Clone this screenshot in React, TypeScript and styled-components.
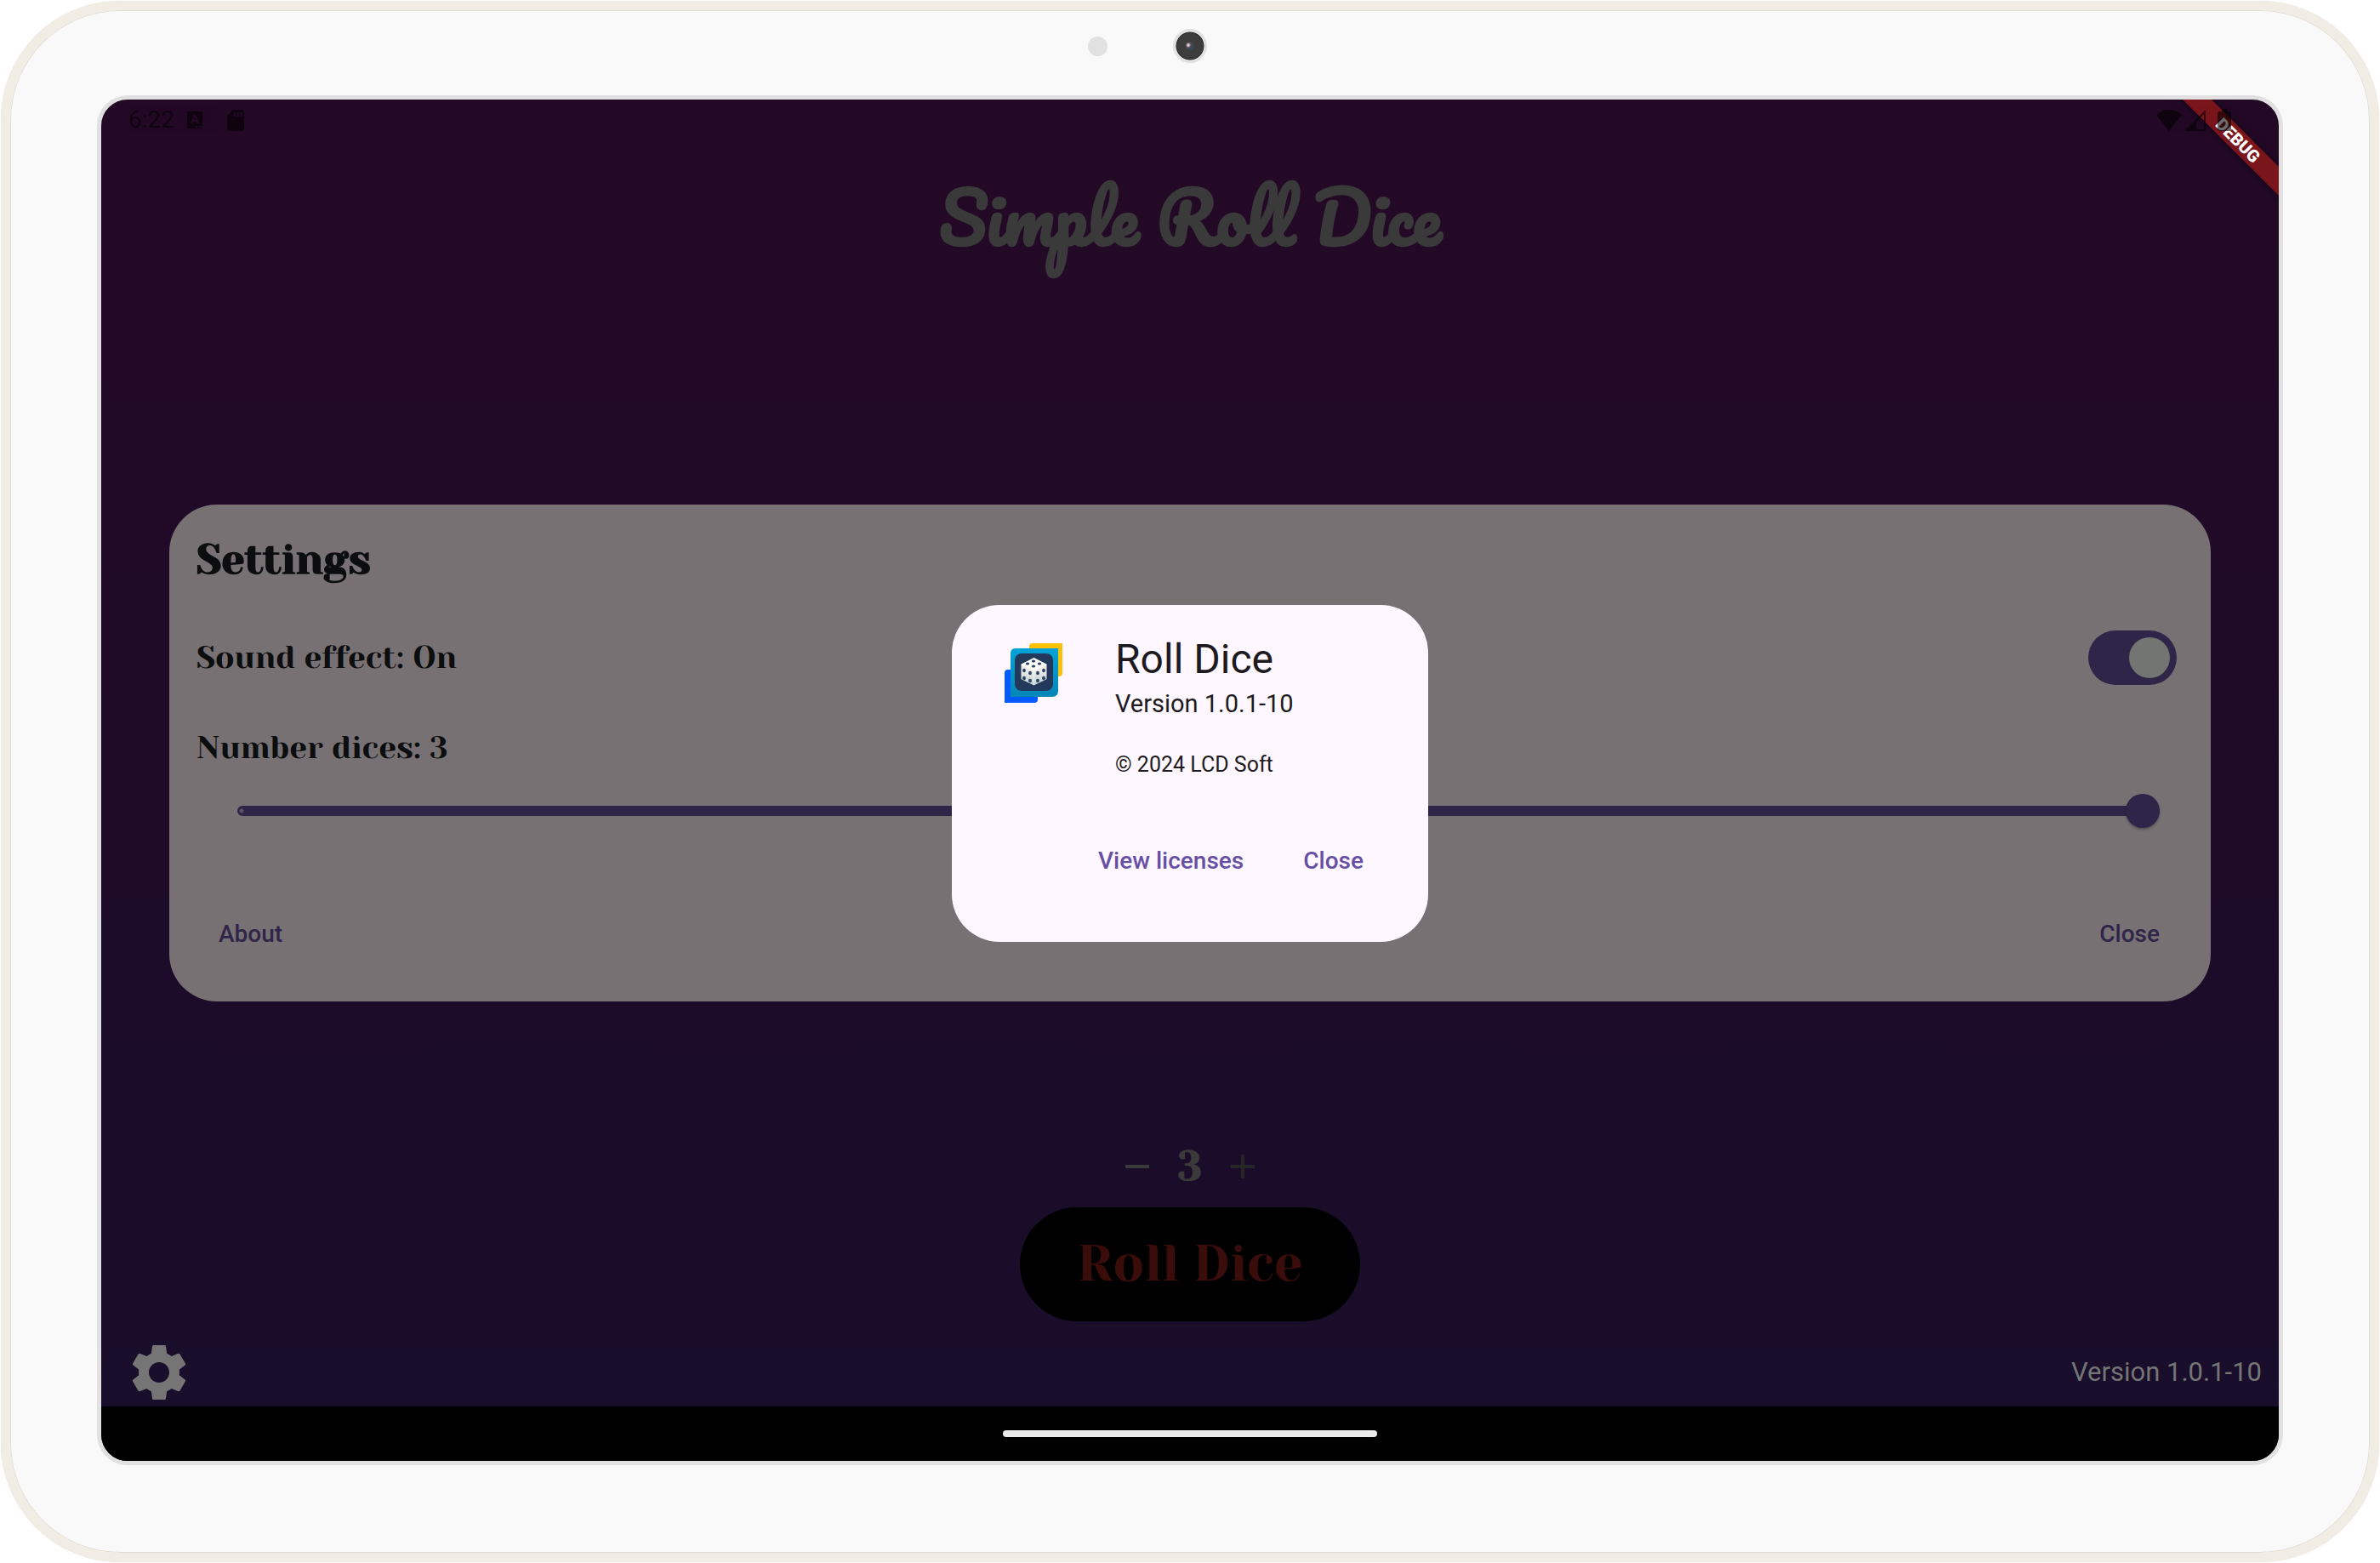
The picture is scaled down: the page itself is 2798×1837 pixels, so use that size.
import React, { useState } from "react";
import styled, { createGlobalStyle } from "styled-components";
import { MdSettings, MdAdd, MdRemove } from "react-icons/md";

const SANS = 'Roboto, "Liberation Sans", sans-serif';
const SERIF = '"Yeseva One", "Liberation Serif", serif';
const SCRIPT = 'Pacifico, Lato, "Liberation Sans", sans-serif';

const GlobalStyle = createGlobalStyle`
  *, *::before, *::after { box-sizing: border-box; }
  body { margin: 0; background: #fff; font-family: ${SANS}; }
  h1, h2, p { margin: 0; }
  button { border: 0; background: none; padding: 0; font-family: inherit; cursor: pointer; }
`;

/* ---------- Tablet ---------- */

const Stage = styled.div`
  display: flex;
  min-height: 100vh;
  padding: 1px;
`;

const Tablet = styled.div`
  flex: 1;
  display: flex;
  flex-direction: column;
  padding: 0 102px 103px;
  border: 11px solid #f1ede4;
  border-radius: 140px;
  background: #f9f9f9;
  box-shadow: inset 0 0 0 1px #e2ddd4, 0 0 1px #d8d4c6;
`;

const Bezel = styled.div`
  display: grid;
  grid-template-columns: 1fr auto 1fr;
  align-items: center;
  column-gap: 77px;
  height: 100px;
  padding: 22px 0 38px;
`;

const Sensor = styled.span`
  justify-self: end;
  width: 23px;
  height: 23px;
  border-radius: 50%;
  background: #e1e1e1;
`;

const Camera = styled.span`
  display: grid;
  place-items: center;
  width: 40px;
  height: 40px;
  border-radius: 50%;
  border: 3px solid #e1e1e1;
  background: radial-gradient(circle, #3d3d3d 15px, #2a2a2a 16px, #f2f2f2 17px);
`;

const Lens = styled.span`
  width: 10px;
  height: 10px;
  border-radius: 50%;
  background: radial-gradient(circle at 30% 40%, #d8ccd0 1px, #574c54 3px, #3a4654 5px);
`;

const Screen = styled.div`
  position: relative;
  flex: 1;
  display: flex;
  flex-direction: column;
  overflow: hidden;
  border: 5px solid #e1e1e1;
  border-radius: 36px;
  background: linear-gradient(#240926, #1e0b28 50%, #180e2b);
`;

/* ---------- System bars ---------- */

const StatusBar = styled.div`
  position: relative;
  z-index: 5;
  display: flex;
  justify-content: space-between;
  align-items: center;
  height: 48px;
  padding: 0 56px 0 32px;
  color: #000;
  opacity: 0.58;
  font-size: 28px;
  line-height: 32px;
`;

const StatusGroup = styled.div<{ $gap: number }>`
  display: flex;
  align-items: center;
  gap: ${(p) => p.$gap}px;

  svg { display: block; fill: currentColor; }
`;

const NavBar = styled.div`
  display: grid;
  place-items: center;
  height: 64px;
  background: #000;
`;

const HomePill = styled.span`
  width: 440px;
  height: 8px;
  border-radius: 4px;
  background: #eaeaea;
`;

const RibbonCorner = styled.div`
  position: absolute;
  top: 0;
  right: 0;
  z-index: 4;
  width: 192px;
  height: 192px;
  overflow: hidden;
  pointer-events: none;
`;

const Ribbon = styled.span`
  position: absolute;
  top: 36px;
  right: -72px;
  width: 240px;
  height: 24px;
  transform: rotate(45deg);
  background: #7a151c;
  box-shadow: 0 0 12px rgba(0, 0, 0, 0.5);
  color: #fff;
  font-size: 20px;
  font-weight: 900;
  line-height: 24px;
  text-align: center;
`;

/* ---------- Home page ---------- */

const Home = styled.main`
  flex: 1;
  display: flex;
  flex-direction: column;
  align-items: center;
`;

const AppTitle = styled.h1`
  flex: 1;
  padding-top: 40px;
  color: #3a3a3a;
  font-family: ${SCRIPT};
  font-size: 81px;
  font-weight: 700;
  line-height: 100px;
`;

const Stepper = styled.div`
  display: flex;
  align-items: center;
  gap: 24px;
  height: 96px;
`;

const StepButton = styled.button`
  display: grid;
  place-items: center;
  color: #3a3a3a;

  &:disabled { color: #262626; }
`;

const StepValue = styled.output`
  color: #3a3a3a;
  font-family: ${SERIF};
  font-size: 49px;
  font-weight: 700;
  line-height: 64px;
`;

const RollButton = styled.button`
  width: 400px;
  height: 134px;
  padding-bottom: 2px;
  border-radius: 67px;
  background: #000;
  color: #3a0d0b;
  font-family: ${SERIF};
  font-size: 60px;
  font-weight: 400;
  line-height: 72px;
`;

const Footer = styled.footer`
  align-self: stretch;
  display: flex;
  justify-content: space-between;
  align-items: center;
  height: 80px;
  margin-top: 20px;
  padding: 0 20px 0 28px;
  color: #757575;
  font-size: 31px;
  line-height: 40px;
`;

const GearButton = styled.button`
  display: grid;
  color: #757575;
`;

/* ---------- Shared by both windows ---------- */

const Layer = styled.div<{ $top: number; $side: number; $depth: number }>`
  position: absolute;
  inset: ${(p) => p.$top}px 0 64px;
  z-index: ${(p) => p.$depth};
  display: grid;
  align-items: center;
  padding: 0 ${(p) => p.$side}px;
`;

const TextButton = styled.button<{ $dim?: boolean }>`
  height: 80px;
  padding: 2px 26px 0;
  border-radius: 40px;
  color: ${(p) => (p.$dim ? "#2f2549" : "#6750a4")};
  font-size: 28px;
  font-weight: 500;
  line-height: 40px;
`;

/* ---------- Settings window ---------- */

const Panel = styled.section`
  display: flex;
  flex-direction: column;
  padding: 30px 34px 40px 32px;
  border-radius: 56px;
  background: #777174;
  color: #0c0d0e;
  font-family: ${SERIF};
`;

const PanelTitle = styled.h2`
  font-size: 49px;
  font-weight: 700;
  line-height: 70px;
`;

const SwitchRow = styled.div`
  display: flex;
  justify-content: space-between;
  align-items: center;
  margin-top: 48px;
  padding-right: 6px;
`;

const SettingLabel = styled.label`
  font-size: 37px;
  font-weight: 400;
  line-height: 64px;
`;

const Switch = styled.input`
  appearance: none;
  width: 104px;
  height: 64px;
  margin: 0;
  padding: 8px;
  border-radius: 32px;
  background: #2f2549;

  &::before {
    content: "";
    display: block;
    width: 48px;
    height: 48px;
    border-radius: 50%;
    background: #737573;
  }

  &:checked::before { margin-left: auto; }
`;

const SliderField = styled.div`
  display: flex;
  flex-direction: column;
  gap: 22px;
  margin-top: 42px;
`;

const Slider = styled.input`
  appearance: none;
  height: 40px;
  margin: 0 26px 0 48px;
  background: none;

  &::-webkit-slider-runnable-track {
    height: 12px;
    border-radius: 6px;
    background: radial-gradient(circle at 5px 6px, #5b5365 2px, #2f2549 3px);
  }

  &::-webkit-slider-thumb {
    appearance: none;
    width: 40px;
    height: 40px;
    margin-top: -14px;
    border-radius: 50%;
    background: #2f2549;
    box-shadow: 0 2px 3px rgba(0, 0, 0, 0.3);
  }
`;

const PanelActions = styled.div`
  display: flex;
  justify-content: space-between;
  margin-top: 84px;
  font-family: ${SANS};
`;

/* ---------- About window ---------- */

const AboutCard = styled.section`
  justify-self: center;
  width: 560px;
  padding: 32px 50px 56px 48px;
  border-radius: 56px;
  background: #fef7ff;
  color: #1d1b20;
`;

const AboutBody = styled.div`
  display: flex;
  align-items: flex-start;
  gap: 48px;
`;

const AboutName = styled.h2`
  font-size: 48px;
  font-weight: 400;
  line-height: 64px;
`;

const AboutVersion = styled.p`
  font-size: 29px;
  line-height: 40px;
`;

const AboutLegal = styled.p`
  margin-top: 36px;
  font-size: 25px;
  line-height: 32px;
`;

const AboutActions = styled.div`
  display: flex;
  justify-content: flex-end;
  gap: 18px;
  margin-top: 56px;
`;

const PIPS: Array<[number, number, number, number]> = [
  [48, 34, 2.2, 1.5],
  [41, 37, 2.2, 1.5],
  [55, 37, 2.2, 1.5],
  [48, 40, 2.2, 1.5],
  [37, 45, 1.9, 2.3],
  [44, 48, 1.9, 2.3],
  [37, 54, 1.9, 2.3],
  [44, 57, 1.9, 2.3],
  [60, 45, 1.9, 2.3],
  [53, 48, 1.9, 2.3],
  [60, 54, 1.9, 2.3],
  [53, 57, 1.9, 2.3],
];

const DiceLogo = () => (
  <svg width="96" height="96" viewBox="0 0 96 96" aria-hidden="true">
    <defs>
      <linearGradient id="tile" x1="0" y1="0" x2="0" y2="1">
        <stop offset="0" stopColor="#05a3d6" />
        <stop offset="1" stopColor="#0586b6" />
      </linearGradient>
      <linearGradient id="side" x1="0" y1="0" x2="0" y2="1">
        <stop offset="0.5" stopColor="#ebeae5" />
        <stop offset="1" stopColor="#b4cdd2" />
      </linearGradient>
    </defs>
    <path d="M47 13H82V48Q82 52 78 52H43V17Q43 13 47 13Z" fill="#ffc107" />
    <path d="M18 44H53V79Q53 83 49 83H14V48Q14 44 18 44Z" fill="#0459ff" />
    <path d="M27 19H77V69Q77 76 70 76H21V25Q21 19 27 19Z" fill="url(#tile)" />
    <rect x="26" y="25" width="45" height="44" rx="8" fill="#22395b" />
    <path d="M48.500 31L63 38V55L48.500 62L34 55V38Z" fill="url(#side)" stroke="url(#side)" strokeLinejoin="round" />
    <path d="M48.500 30L64 38L48.500 46L33 38Z" fill="#fbfaf6" />
    <path d="M48.500 46V62" stroke="#fbfaf6" strokeWidth="1" />
    {PIPS.map(([cx, cy, rx, ry]) => (
      <ellipse key={`${cx}-${cy}`} cx={cx} cy={cy} rx={rx} ry={ry} fill="#2b4263" />
    ))}
  </svg>
);

const KeyboardIcon = () => (
  <svg width="32" height="20" viewBox="0 0 32 20" aria-hidden="true">
    <path
      fillRule="evenodd"
      d="M1 0H17Q18 0 18 1V19Q18 20 17 20H1Q0 20 0 19V1Q0 0 1 0ZM7.500 4L4 14H6.500L7 12H11L11.500 14H14L10.500 4ZM9 7L10.300 10H7.700ZM10 17V19H12V17ZM13 17V19H15V17ZM16 17V19H17.500V17Z"
    />
  </svg>
);

const SdCardIcon = () => (
  <svg width="20" height="25" viewBox="0 0 20 25" aria-hidden="true">
    <path
      fillRule="evenodd"
      d="M7 0H18Q20 0 20 2V23Q20 25 18 25H2Q0 25 0 23V7ZM7.500 3V8H10V3ZM11.500 3V8H14V3ZM15.500 3V8H18V3Z"
    />
  </svg>
);

const WifiIcon = () => (
  <svg width="30" height="25" viewBox="0 0 30 25" aria-hidden="true">
    <path d="M15 25L0 6Q6 0 15 0T30 6Z" />
  </svg>
);

const SignalIcon = () => (
  <svg width="36" height="25" viewBox="0 0 36 25" aria-hidden="true">
    <path fillRule="evenodd" d="M0 25L25 0V25ZM14 14V23H23V5Z" />
  </svg>
);

const BatteryIcon = () => (
  <svg width="16" height="26" viewBox="0 0 16 26" aria-hidden="true">
    <path d="M5 0H11V3H14Q16 3 16 5V24Q16 26 14 26H2Q0 26 0 24V5Q0 3 2 3H5Z" />
  </svg>
);

const MAX_DICES = 3;

export default function App() {
  const [dices, setDices] = useState(MAX_DICES);
  const [sound, setSound] = useState(true);
  const [settingsOpen, setSettingsOpen] = useState(true);
  const [aboutOpen, setAboutOpen] = useState(true);

  return (
    <Stage>
      <GlobalStyle />
      <Tablet>
        <Bezel>
          <Sensor />
          <Camera>
            <Lens />
          </Camera>
        </Bezel>
        <Screen>
          <StatusBar>
            <StatusGroup $gap={15}>
              <span>6:22</span>
              <KeyboardIcon />
              <SdCardIcon />
            </StatusGroup>
            <StatusGroup $gap={3}>
              <WifiIcon />
              <SignalIcon />
              <BatteryIcon />
            </StatusGroup>
          </StatusBar>

          <Home>
            <AppTitle>Simple Roll Dice</AppTitle>
            <Stepper>
              <StepButton aria-label="Fewer dices" disabled={dices <= 1} onClick={() => setDices(dices - 1)}>
                <MdRemove size={48} />
              </StepButton>
              <StepValue>{dices}</StepValue>
              <StepButton aria-label="More dices" disabled={dices >= MAX_DICES} onClick={() => setDices(dices + 1)}>
                <MdAdd size={48} />
              </StepButton>
            </Stepper>
            <RollButton>Roll Dice</RollButton>
            <Footer>
              <GearButton aria-label="Settings" onClick={() => setSettingsOpen(true)}>
                <MdSettings size={80} />
              </GearButton>
              <span>Version 1.0.1-10</span>
            </Footer>
          </Home>

          <NavBar>
            <HomePill />
          </NavBar>

          {settingsOpen && (
            <Layer $top={0} $side={80} $depth={1}>
              <Panel role="dialog" aria-labelledby="settings-title">
                <PanelTitle id="settings-title">Settings</PanelTitle>
                <SwitchRow>
                  <SettingLabel htmlFor="sound">Sound effect: {sound ? "On" : "Off"}</SettingLabel>
                  <Switch
                    id="sound"
                    type="checkbox"
                    role="switch"
                    checked={sound}
                    onChange={(e) => setSound(e.target.checked)}
                  />
                </SwitchRow>
                <SliderField>
                  <SettingLabel htmlFor="dices">Number dices: {dices}</SettingLabel>
                  <Slider
                    id="dices"
                    type="range"
                    min={1}
                    max={MAX_DICES}
                    value={dices}
                    onChange={(e) => setDices(Number(e.target.value))}
                  />
                </SliderField>
                <PanelActions>
                  <TextButton $dim onClick={() => setAboutOpen(true)}>
                    About
                  </TextButton>
                  <TextButton $dim onClick={() => setSettingsOpen(false)}>
                    Close
                  </TextButton>
                </PanelActions>
              </Panel>
            </Layer>
          )}

          {aboutOpen && (
            <Layer $top={48} $side={48} $depth={2}>
              <AboutCard role="dialog" aria-labelledby="about-title">
                <AboutBody>
                  <DiceLogo />
                  <div>
                    <AboutName id="about-title">Roll Dice</AboutName>
                    <AboutVersion>Version 1.0.1-10</AboutVersion>
                    <AboutLegal>© 2024 LCD Soft</AboutLegal>
                  </div>
                </AboutBody>
                <AboutActions>
                  <TextButton>View licenses</TextButton>
                  <TextButton onClick={() => setAboutOpen(false)}>Close</TextButton>
                </AboutActions>
              </AboutCard>
            </Layer>
          )}

          <RibbonCorner>
            <Ribbon>DEBUG</Ribbon>
          </RibbonCorner>
        </Screen>
      </Tablet>
    </Stage>
  );
}
